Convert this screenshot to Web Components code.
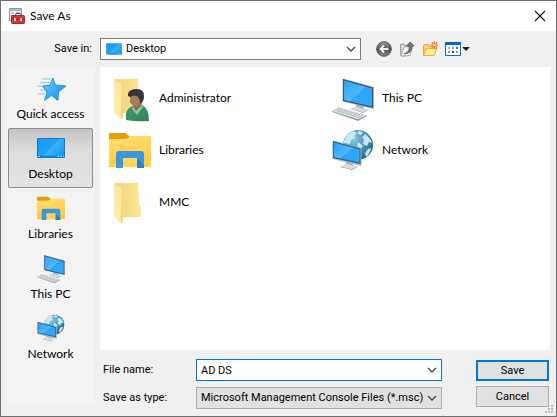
<!DOCTYPE html>
<html lang="en">
<head>
<meta charset="utf-8">
<title>Save As</title>
<style>
  html, body { height: 100%; margin: 0; }
  body { font: 12px/16px Lato, "Open Sans", sans-serif; color: #000; background: #f0f0f0; }
</style>
</head>
<body>
<save-dialog></save-dialog>

<script>
const folder = `
  <path d="M8 5H32L33 26L35 28V39H16Z" fill="url(#fold)"/>
  <path d="M8 5L16 11L17 44L15 45L8 38Z" fill="#ffe8a0"/>
  <path d="M16 11L17 12V44L15 45Z" fill="#f3d67c"/>`;
const foldGrad = `<linearGradient id="fold"><stop stop-color="#f1d481"/><stop offset=".5" stop-color="#f7dc86"/><stop offset="1" stop-color="#ffe795"/></linearGradient>`;
const screenGrad = `<linearGradient id="scr" x2="1" y2="1"><stop stop-color="#2f9ff2"/><stop offset=".5" stop-color="#4db8ff"/><stop offset=".52" stop-color="#2ba4fa"/><stop offset="1" stop-color="#30a8fb"/></linearGradient>`;
const ICONS = {
  star: ['0 0 32 32', `<defs><linearGradient id="g" x2="1" y2="1"><stop stop-color="#6bcaff"/><stop offset="1" stop-color="#1590e8"/></linearGradient></defs>
    <path d="M18 6L20.500 13L31 14L23.500 20L23 28.500L16.500 23.500L9.500 28.500L12 20L7.500 14L15 13Z" fill="url(#g)" stroke="#1583cf" stroke-width=".8"/>
    <path d="M7 7H16M5 10.500H15M2 14H8M5 18H11M3 22H10" stroke="#69bdf0" stroke-width=".8"/>`],
  desktop: ['0 0 48 48', `<defs><linearGradient id="g" x2="1" y2=".7"><stop stop-color="#189bf5"/><stop offset=".55" stop-color="#1da2fb"/><stop offset=".58" stop-color="#3db3ff"/><stop offset="1" stop-color="#149cf8"/></linearGradient></defs>
    <path d="M3.800 9.800H44.200V38.200H3.800Z" fill="url(#g)" stroke="#1079c5" stroke-width="1.500"/>
    <path d="M5 36.500H43" stroke="#0c76bd" stroke-width="1.500"/><path d="M5 36.500H7M34 36.500H36M38 36.500H40M42 36.500H43" stroke="#fff" stroke-width="1.500"/>`],
  libraries: ['0 0 48 48', `<defs><linearGradient id="g" y2="1" x2=".3"><stop stop-color="#ffdf77"/><stop offset="1" stop-color="#ffcb3f"/></linearGradient></defs>
    <path d="M3 8Q3 7 4 7H18Q20 7 21 8L24 11V15H3Z" fill="#e0a108"/>
    <path d="M3 13H19Q21 13 22 12L24 10H44Q45 10 45 11V40Q45 41 44 41H4Q3 41 3 40Z" fill="url(#g)"/>
    <path d="M17 32H31V41H17Z" fill="#ffd45a"/>
    <path d="M10 42V28Q10 25 13 25H35Q38 25 38 28V42H31V32H17V42Z" fill="#3a96dd"/><path d="M31 32L38 39V42H31Z" fill="#2f80c4"/>`],
  folder: ['0 0 48 48', `<defs>${foldGrad}</defs>${folder}`],
  user: ['0 0 48 48', `<defs>${foldGrad}<linearGradient id="b" x2="1" y2="1"><stop stop-color="#479c70"/><stop offset="1" stop-color="#327f5a"/></linearGradient></defs>${folder}
    <path d="M20 46Q19 37 23 34L28 31L36 31Q43 34 43 47Q31 48 20 46Z" fill="url(#b)"/>
    <path d="M27 29L35 27L36 32L29 38L27 33Z" fill="#94694f"/>
    <path d="M27 32L30 37L36 31L37 33L31 41L26 35Z" fill="#8ac5a5"/>
    <path d="M24 20H37Q38 29 32 32Q26 33 24 28Z" fill="#a97b5d"/>
    <path d="M22 20Q23 15 31 15Q38 15 38 22Q38 28 34 30Q34 25 32 23Q29 20 24 23L22 22Z" fill="#35353a"/>`],
  pc: ['0 0 48 48', `<defs>${screenGrad}</defs>
    <path d="M27 29L35 31V35L40 36L34 39L21 35L27 33Z" fill="#aab5bd"/><path d="M21 35L27 33L40 36L34 38Z" fill="#d5dce1"/>
    <path d="M13.500 4.500L45 13V35L13.500 27.500Z" fill="#a9b4bb"/><path d="M14 5L44 13.500V34L14 27Z" fill="#38566b"/>
    <path d="M15 6.500L43 14.500V32.500L15 26Z" fill="url(#scr)"/>
    <path d="M3 37L10 33L38 41L29 46Z" fill="#e5e9eb"/><path d="M3 37L29 45L38 41V42L29 47L3 38Z" fill="#98a4ab"/>
    <path d="M5 36L31 44M7 35L33 43M9 34L35 42" stroke="#939ea5" stroke-width=".8" stroke-dasharray="2 1"/>
    <path d="M8 38L14 35M13 40L19 36M18 41L24 38M23 43L29 39M28 44L34 41" stroke="#b6c0c6" stroke-width=".7"/>`],
  network: ['0 0 48 48', `<defs>${screenGrad}<radialGradient id="gl" cx=".35" cy=".3" r=".8"><stop stop-color="#8ec7df"/><stop offset=".5" stop-color="#4b94b5"/><stop offset="1" stop-color="#1c5f83"/></radialGradient></defs>
    <circle cx="29" cy="19" r="15" fill="url(#gl)"/>
    <path d="M15 15Q17 8 24 5L28 7L25 10L27 12L22 14L21 18L15 17ZM29 5L34 6L32 9L29 8ZM36 8Q41 11 43 17L40 16L38 20L34 18L35 13L33 12ZM29 16L34 20L31 23L28 20ZM39 23L42 22Q41 28 37 31L36 27Z" fill="#c9e9f2"/>
    <path d="M17 33L24 35V39L29 41L23 44L11 41L17 38Z" fill="#a6b1b9"/><path d="M11 40L18 38L29 41L22 43Z" fill="#dae0e4"/>
    <path d="M3.500 14.500L32.500 22V40L3.500 33Z" fill="#a5b3bc"/><path d="M4 15L31.500 22.500V38L4 32Z" fill="#2d6389"/>
    <path d="M5 16.500L30.500 23.500V36.500L5 31Z" fill="url(#scr)"/>`],
  app: ['0 0 16 16', `<path d="M.5 .5H12.500V12.500H.5Z" fill="#eef1f5" stroke="#8797ac"/><path d="M1 2H12" stroke="#8fa1b8" stroke-width="1.500"/><path d="M2 5H5M2 7.500H4M2 10H3M7 5H11" stroke="#8090a4"/>
    <path d="M6.500 8V6.500Q6.500 5.500 8 5.500H10.500Q12 5.500 12 6.500V8" fill="none" stroke="#3e3e44"/>
    <rect x="2.500" y="7.500" width="13" height="8" rx="1" fill="#d13b35" stroke="#9e2724"/><path d="M3 11H15" stroke="#901d20"/><path d="M5 10H7V13H5ZM11 10H13V13H11Z" fill="#e1d7d6"/>`],
  back: ['0 0 16 16', `<defs><linearGradient id="g" x2="0" y2="1"><stop stop-color="#a0a0a0"/><stop offset=".5" stop-color="#505050"/><stop offset="1" stop-color="#8d8d8d"/></linearGradient></defs>
    <circle cx="8" cy="8" r="7.300" fill="url(#g)" stroke="#505050"/><path d="M12.500 8H4.500M8 4.500L4.500 8L8 11.500" fill="none" stroke="#f0f0f0" stroke-width="2"/>`],
  up: ['0 0 16 16', `<path d="M1.500 3.500L5 3L6 5H10V14.500L2 15Z" fill="#dedede" stroke="#909090"/><path d="M2 15L5 6L14 5L11 14.500Z" fill="#f3f3f3" stroke="#9c9c9c" stroke-width=".8"/>
    <path d="M5 13Q11 11 10 5H7.500L11 1L15 5H12.500Q14 12 5 13Z" fill="#777" stroke="#4f4f4f" stroke-width=".7"/>`],
  newfolder: ['0 0 16 16', `<path d="M1.500 14V4.500L2.500 3.500H6L7.500 5H12V14Z" fill="#f6d26c" stroke="#d6a440"/><path d="M1.500 14.500L4 7.500H15L12 14.500Z" fill="#ffeb9c" stroke="#dcae48"/>
    <path d="M12.500 0V8M8.500 4H16M9.700 1.200L15.300 6.800M15.300 1.200L9.700 6.800" stroke="#f26b38" stroke-width="1.200"/><circle cx="12.500" cy="4" r="1.500" fill="#ffd15a"/>`],
  views: ['0 0 16 16', `<path d="M.5 1.500H15.500V14.500H.5Z" fill="#fff" stroke="#006bd6"/><path d="M0 2.500H16" stroke="#006bd6" stroke-width="3"/>
    <path d="M3 6H5V8H3Z" fill="#a8adc8"/><path d="M7 6H9V8H7Z" fill="#8c8fd0"/><path d="M11 6H13V8H11Z" fill="#16864a"/><path d="M3 10H5V12H3Z" fill="#f47445"/><path d="M7 10H9V12H7Z" fill="#1b3c9f"/><path d="M11 10H13V12H11Z" fill="#c59620"/>`],
  close: ['0 0 12 12', `<path d="M1 1L11 11M11 1L1 11" stroke="#111" stroke-width="1.100"/>`],
  chevron: ['0 0 10 10', `<path d="M1 3L5 7L9 3" fill="none" stroke="#444" stroke-width="1.300"/>`],
  caret: ['0 0 8 8', `<path d="M0 2H8L4 6Z" fill="#222"/>`],
  grip: ['0 0 10 10', `<path d="M7 1H9V3H7ZM4 4H6V6H4ZM7 4H9V6H7ZM1 7H3V9H1ZM4 7H6V9H4ZM7 7H9V9H7Z" fill="#bdbdbd"/>`]
};

class BaseElement extends HTMLElement {
  render(html) {
    if (!this.shadowRoot) this.attachShadow({ mode: 'open' });
    this.shadowRoot.innerHTML = `<style>*{box-sizing:border-box} button,input,select{font:inherit;color:inherit;margin:0;outline:none}</style>` + html;
  }
}

customElements.define('ui-icon', class extends BaseElement {
  connectedCallback() {
    const [box, art] = ICONS[this.getAttribute('name')];
    this.render(`<style>:host{display:block;flex:none;width:var(--size,16px);height:var(--size,16px)} svg{display:block;width:100%;height:100%}</style>
      <svg viewBox="${box}" aria-hidden="true">${art}</svg>`);
  }
});

customElements.define('title-bar', class extends BaseElement {
  connectedCallback() {
    this.render(`<style>
      :host{display:flex;align-items:center;gap:5px;height:30px;padding:0 8px;background:#fff}
      h1{flex:1;margin:0;font:inherit}
      button{display:grid;place-items:center;width:16px;height:16px;padding:0;border:0;background:none}
      button ui-icon{--size:12px}
    </style><ui-icon name="app"></ui-icon><h1><slot></slot></h1><button aria-label="Close"><ui-icon name="close"></ui-icon></button>`);
  }
});

customElements.define('tool-button', class extends BaseElement {
  connectedCallback() {
    this.render(`<style>:host{display:block} button{display:flex;align-items:center;gap:1px;padding:0;border:0;background:none} .caret{--size:8px}</style>
      <button aria-label="${this.getAttribute('label')}"><ui-icon name="${this.getAttribute('icon')}"></ui-icon>${this.hasAttribute('menu') ? '<ui-icon class="caret" name="caret"></ui-icon>' : ''}</button>`);
  }
});

// kind: "look" (white list with icon), "edit" (editable), "type" (grey list)
customElements.define('combo-field', class extends BaseElement {
  connectedCallback() {
    const kind = this.getAttribute('kind'), value = this.getAttribute('value');
    const field = kind === 'edit'
      ? `<input id="f" type="text" value="${value}"><button aria-label="Show earlier names"><ui-icon name="chevron"></ui-icon></button>`
      : `<select id="f"><option>${value}</option></select><ui-icon name="chevron"></ui-icon>`;
    this.render(`<style>
      :host{display:grid;grid-template-columns:var(--label) minmax(0,1fr);align-items:center;font-family:Roboto,sans-serif;font-size:11px}
      label{text-align:var(--label-align,left);padding-right:8px}
      .box{display:flex;align-items:center;height:22px;border:1px solid #7a7a7a;background:#fff;padding:0 4px}
      .edit{border-color:#0078d7}
      .type{border-color:#adadad;background:#e1e1e1}
      .look{gap:3px}
      .look ui-icon[name=desktop]{--size:18px}
      input,select{flex:1;min-width:0;height:20px;padding:0;border:0;background:none;appearance:none}
      .box>ui-icon[name=chevron],button ui-icon{--size:10px}
      button{padding:0;border:0;background:none}
    </style><label for="f">${this.getAttribute('label')}</label>
    <div class="box ${kind}">${kind === 'look' ? '<ui-icon name="desktop"></ui-icon>' : ''}${field}</div>`);
  }
});

customElements.define('place-item', class extends BaseElement {
  connectedCallback() {
    this.render(`<style>
      :host{display:block}
      button{display:flex;flex-direction:column;align-items:center;gap:2px;width:100%;height:60px;padding:3px 0 0;border:1px solid transparent;background:none}
      :host([selected]) button{border-color:#8b8b8b;border-radius:2px;background:linear-gradient(#c3c3c3,#dcdcdc 35%,#e4e4e4)}
      ui-icon{--size:32px}
    </style><button><ui-icon name="${this.getAttribute('icon')}"></ui-icon><span><slot></slot></span></button>`);
  }
});

customElements.define('file-item', class extends BaseElement {
  connectedCallback() {
    this.render(`<style>
      :host{display:block}
      button{display:flex;align-items:center;gap:5px;width:100%;height:52px;padding:0;border:0;background:none;text-align:left}
      ui-icon{--size:48px}
    </style><button><ui-icon name="${this.getAttribute('icon')}"></ui-icon><span><slot></slot></span></button>`);
  }
});

customElements.define('push-button', class extends BaseElement {
  connectedCallback() {
    this.render(`<style>
      :host{display:block;font-family:Roboto,sans-serif;font-size:11px}
      button{display:block;width:100%;height:21px;padding:0;border:1px solid #adadad;background:#e1e1e1;line-height:16px}
      :host([primary]) button{border:2px solid #0078d7}
    </style><button><slot></slot></button>`);
  }
});

customElements.define('save-dialog', class extends BaseElement {
  connectedCallback() {
    this.render(`<style>
      :host{display:flex;flex-direction:column;min-height:100vh;box-sizing:border-box;border:1px solid #706e71;background:#f0f0f0;position:relative}
      .look{display:flex;align-items:center;padding:7px 86px 7px 7px}
      .look combo-field{flex:1;--label:92px;--label-align:right}
      .tools{display:flex;gap:7px;padding-left:15px}
      main{flex:1;display:grid;grid-template-columns:87px minmax(0,1fr);gap:6px;padding:0 6px 11px 6px}
      nav{background:#f3f3f3;padding:1px}
      .right{display:flex;flex-direction:column;min-width:0}
      .files{flex:1;display:grid;grid-template-columns:repeat(auto-fill,218px);column-gap:5px;align-content:start;padding:5px 0 0 6px;background:#fff}
      form{display:flex;gap:34px;padding:9px 1px 0 3px;margin-bottom:-4px}
      .fields{flex:1;display:grid;gap:6px;min-width:0}
      .actions{width:73px;display:flex;flex-direction:column;gap:5px;padding-top:1px}
      form combo-field{--label:93px}
      .grip{position:absolute;right:2px;bottom:2px;--size:10px}
    </style>
    <title-bar>Save As</title-bar>
    <div class="look">
      <combo-field kind="look" label="Save in:" value="Desktop"></combo-field>
      <div class="tools">
        <tool-button icon="back" label="Back"></tool-button>
        <tool-button icon="up" label="Up one level"></tool-button>
        <tool-button icon="newfolder" label="New folder"></tool-button>
        <tool-button icon="views" label="View menu" menu></tool-button>
      </div>
    </div>
    <main>
      <nav>
        <place-item icon="star">Quick access</place-item>
        <place-item icon="desktop" selected>Desktop</place-item>
        <place-item icon="libraries">Libraries</place-item>
        <place-item icon="pc">This PC</place-item>
        <place-item icon="network">Network</place-item>
      </nav>
      <div class="right">
        <div class="files">
          <file-item icon="user">Administrator</file-item>
          <file-item icon="pc">This PC</file-item>
          <file-item icon="libraries">Libraries</file-item>
          <file-item icon="network">Network</file-item>
          <file-item icon="folder">MMC</file-item>
        </div>
        <form onsubmit="return false">
          <div class="fields">
            <combo-field kind="edit" label="File name:" value="AD DS"></combo-field>
            <combo-field kind="type" label="Save as type:" value="Microsoft Management Console Files (*.msc)"></combo-field>
          </div>
          <div class="actions">
            <push-button primary>Save</push-button>
            <push-button>Cancel</push-button>
          </div>
        </form>
      </div>
    </main>
    <ui-icon class="grip" name="grip"></ui-icon>`);
  }
});
</script>
</body>
</html>
